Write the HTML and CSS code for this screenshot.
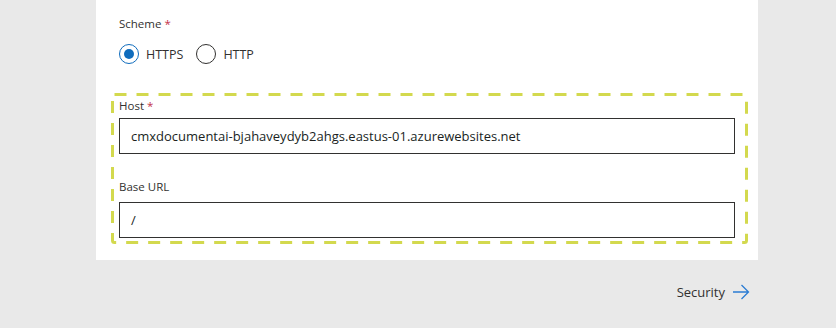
FILE: index.html
```html
<!DOCTYPE html>
<html>
<head>
<meta charset="utf-8">
<link rel="stylesheet" href="styles.css">
</head>
<body>
<div class="page">
  <div class="panel">
    <div class="field-label scheme-label">Scheme <span class="req">*</span></div>
    <div class="radios">
      <label class="radio"><span class="dot checked"></span><span class="radio-text">HTTPS</span></label>
      <label class="radio"><span class="dot"></span><span class="radio-text">HTTP</span></label>
    </div>
    <div class="highlight">
      <svg class="dash" width="638" height="151" viewBox="0 0 638 151">
        <rect x="1.5" y="1.5" width="634" height="148" rx="2" fill="none" stroke="#d3d94e" stroke-width="3" stroke-dasharray="12 10"/>
      </svg>
      <div class="field-label">Host <span class="req">*</span></div>
      <div class="input host-input">cmxdocumentai-bjahaveydyb2ahgs.eastus-01.azurewebsites.net</div>
      <div class="field-label base-label">Base URL</div>
      <div class="input">/</div>
    </div>
  </div>
  <div class="footer">
    <span class="next">Security</span>
    <svg class="arrow" width="18" height="16" viewBox="0 0 18 16"><path d="M1 8H16.5M9.5 1L16.5 8L9.5 15" fill="none" stroke="#2b7cd3" stroke-width="1.3"/></svg>
  </div>
</div>
</body>
</html>
```

FILE: styles.css
```css
html, body {
  margin: 0;
  padding: 0;
  background: #e9e9e9;
  font-family: "Open Sans", "Noto Sans", sans-serif;
  color: #323130;
}
.page {
  width: 836px;
  height: 328px;
  overflow: hidden;
}
.panel {
  margin-left: 96px;
  width: 662px;
  height: 260px;
  background: #ffffff;
  box-sizing: border-box;
  padding: 15px 0 0 23px;
}
.field-label {
  font-size: 11.5px;
  line-height: 18px;
  color: #323130;
}
.req {
  color: #c4314b;
}
.radios {
  display: flex;
  gap: 13px;
  margin-top: 10px;
  height: 22px;
  align-items: center;
}
.radio {
  display: flex;
  align-items: center;
  gap: 7px;
  font-size: 12.5px;
}
.dot {
  width: 18px;
  height: 18px;
  border: 1px solid #323130;
  border-radius: 50%;
  box-sizing: content-box;
  position: relative;
}
.dot.checked {
  border-color: #0f6cbd;
}
.dot.checked::after {
  content: "";
  position: absolute;
  left: 4px;
  top: 4px;
  width: 10px;
  height: 10px;
  border-radius: 50%;
  background: #0f6cbd;
}
.highlight {
  position: relative;
  margin-top: 28px;
  margin-left: -8px;
  width: 638px;
  height: 151px;
  box-sizing: border-box;
  padding: 4px 0 0 8px;
}
.dash {
  position: absolute;
  left: 0;
  top: 0;
}
.input {
  width: 616px;
  height: 36px;
  box-sizing: border-box;
  border: 1px solid #323130;
  padding: 0 11px;
  font-size: 13px;
  line-height: 34px;
  color: #201f1e;
  margin-top: 6px;
}
.host-input {
  margin-top: 3px;
}
.base-label {
  margin-top: 24px;
}
.footer {
  display: flex;
  justify-content: flex-end;
  align-items: center;
  gap: 7px;
  padding-right: 86px;
  margin-top: 23px;
}
.next {
  font-size: 13px;
  color: #323130;
}
.arrow {
  display: block;
}
```
